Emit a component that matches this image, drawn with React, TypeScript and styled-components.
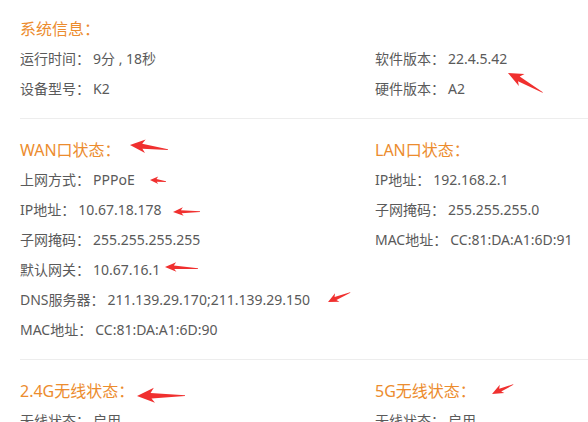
import React from 'react';
import styled, {createGlobalStyle} from 'styled-components';

const GlobalStyle = createGlobalStyle`
  html, body {
    margin: 0;
    padding: 0;
    background: #fff;
  }
  body {
    font-family: "Noto Sans", "Noto Sans CJK SC", sans-serif;
    overflow: hidden;
  }
`;

// One row of label : value
interface Item {
  label: string;
  value: string;
}

interface Column {
  title?: string;
  items: Item[];
}

interface SectionData {
  left: Column;
  right: Column;
}

const sections: SectionData[] = [
  {
    left: {
      title: '系统信息：',
      items: [
        {label: '运行时间：', value: '9分 , 18秒'},
        {label: '设备型号：', value: 'K2'},
      ],
    },
    right: {
      items: [
        {label: '软件版本：', value: '22.4.5.42'},
        {label: '硬件版本：', value: 'A2'},
      ],
    },
  },
  {
    left: {
      title: 'WAN口状态：',
      items: [
        {label: '上网方式：', value: 'PPPoE'},
        {label: 'IP地址：', value: '10.67.18.178'},
        {label: '子网掩码：', value: '255.255.255.255'},
        {label: '默认网关：', value: '10.67.16.1'},
        {label: 'DNS服务器：', value: '211.139.29.170;211.139.29.150'},
        {label: 'MAC地址：', value: 'CC:81:DA:A1:6D:90'},
      ],
    },
    right: {
      title: 'LAN口状态：',
      items: [
        {label: 'IP地址：', value: '192.168.2.1'},
        {label: '子网掩码：', value: '255.255.255.0'},
        {label: 'MAC地址：', value: 'CC:81:DA:A1:6D:91'},
      ],
    },
  },
  {
    left: {
      title: '2.4G无线状态：',
      items: [
        {label: '无线状态：', value: '启用'},
        {label: '无线名称：', value: 'Phicomm_K2'},
      ],
    },
    right: {
      title: '5G无线状态：',
      items: [
        {label: '无线状态：', value: '启用'},
        {label: '无线名称：', value: 'Phicomm_K2_5G'},
      ],
    },
  },
];

// Annotation arrows drawn over the page: tip, tail, head length, head half width
interface ArrowSpec {
  tip: [number, number];
  tail: [number, number];
  head: number;
  wing: number;
}

const arrows: ArrowSpec[] = [
  {tip: [508, 73], tail: [543, 92], head: 15, wing: 7},
  {tip: [130, 145], tail: [168, 149], head: 15, wing: 7},
  {tip: [150, 180], tail: [166, 181], head: 8, wing: 4},
  {tip: [173, 212], tail: [200, 211], head: 10, wing: 4.5},
  {tip: [165, 267], tail: [198, 268], head: 11, wing: 5},
  {tip: [328, 302], tail: [350, 292], head: 10, wing: 5},
  {tip: [137, 396], tail: [185, 395], head: 17, wing: 8},
  {tip: [492, 394], tail: [513, 384], head: 11, wing: 5},
];

const Page = styled.div`
  position: relative;
  width: 588px;
  height: 422px;
  overflow: hidden;
  padding-left: 20px;
  box-sizing: border-box;
`;

const Section = styled.section`
  display: grid;
  grid-template-columns: 355px 1fr;
  padding: 16px 0 14px;
  border-bottom: 1px solid #ededed;

  &:first-child {
    padding-top: 14px;
  }
`;

const Col = styled.div`
  display: flex;
  flex-direction: column;
`;

const Title = styled.div`
  height: 30px;
  line-height: 30px;
  font-size: 16px;
  color: #ec8c2e;
  white-space: nowrap;
`;

const Row = styled.div`
  height: 30px;
  line-height: 30px;
  font-size: 14px;
  color: #5a5a5a;
  white-space: nowrap;
`;

const Value = styled.span`
  margin-left: 3px;
`;

const Overlay = styled.svg`
  position: absolute;
  left: 0;
  top: 0;
  pointer-events: none;
`;

const Arrow: React.FC<ArrowSpec> = ({tip, tail, head, wing}) => {
  const dx = tail[0] - tip[0];
  const dy = tail[1] - tip[1];
  const len = Math.sqrt(dx * dx + dy * dy);
  const angle = (Math.atan2(dy, dx) * 180) / Math.PI;
  const neck = wing * 0.35;
  const points = [
    [0, 0],
    [head, -wing],
    [head * 0.8, -neck],
    [len, 0.3],
    [len, 0.9],
    [head * 0.85, neck],
    [head * 1.05, wing * 0.9],
  ]
    .map((p) => p.join(','))
    .join(' ');
  return (
    <polygon
      points={points}
      fill="#f0302f"
      transform={`translate(${tip[0]} ${tip[1]}) rotate(${angle})`}
    />
  );
};

const ColumnView: React.FC<{col: Column}> = ({col}) => (
  <Col>
    <Title>{col.title ?? ''}</Title>
    {col.items.map((it) => (
      <Row key={it.label}>
        {it.label}
        <Value>{it.value}</Value>
      </Row>
    ))}
  </Col>
);

const App: React.FC = () => (
  <>
    <GlobalStyle />
    <Page>
      {sections.map((s, i) => (
        <Section key={i}>
          <ColumnView col={s.left} />
          <ColumnView col={s.right} />
        </Section>
      ))}
      <Overlay width={588} height={422} viewBox="0 0 588 422">
        {arrows.map((a, i) => (
          <Arrow key={i} {...a} />
        ))}
      </Overlay>
    </Page>
  </>
);

export default App;
